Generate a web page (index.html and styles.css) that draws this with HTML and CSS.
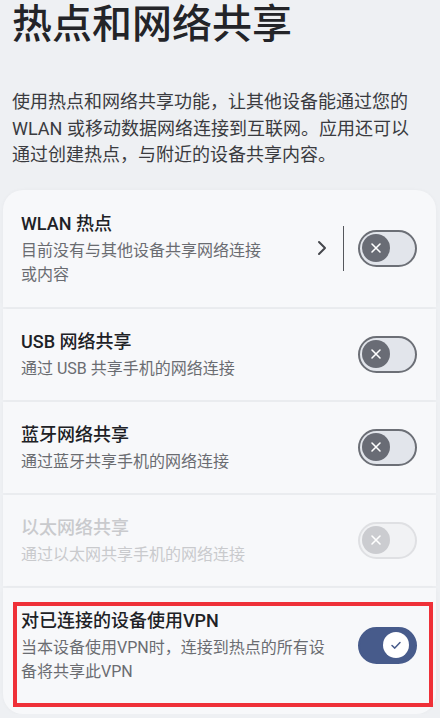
FILE: index.html
```html
<!DOCTYPE html>
<html lang="zh-CN">

<head>
    <meta charset="UTF-8">
    <meta name="viewport" content="width=device-width, initial-scale=1.0">
    <title>热点和网络共享</title>
    <link rel="stylesheet" href="styles.css">
</head>

<body>
    <h1 class="page-title">热点和网络共享</h1>
    <p class="intro">使用热点和网络共享功能，让其他设备能通过您的WLAN 或移动数据网络连接到互联网。应用还可以通过创建热点，与附近的设备共享内容。</p>

    <div class="list">
        <div class="row first">
            <div class="text">
                <div class="title">WLAN 热点</div>
                <div class="summary">目前没有与其他设备共享网络连接或内容</div>
            </div>
            <div class="chevron">
                <svg width="10" height="16" viewBox="0 0 10 16"><path d="M2 2l6 6-6 6" fill="none" stroke="#45474c" stroke-width="2" stroke-linecap="round" stroke-linejoin="round"/></svg>
            </div>
            <div class="divider"></div>
            <div class="switch">
                <div class="knob">
                    <svg width="12" height="12" viewBox="0 0 12 12"><path d="M2 2l8 8M10 2l-8 8" stroke="#fff" stroke-width="1.6" stroke-linecap="round"/></svg>
                </div>
            </div>
        </div>

        <div class="row">
            <div class="text">
                <div class="title">USB 网络共享</div>
                <div class="summary">通过 USB 共享手机的网络连接</div>
            </div>
            <div class="switch">
                <div class="knob">
                    <svg width="12" height="12" viewBox="0 0 12 12"><path d="M2 2l8 8M10 2l-8 8" stroke="#fff" stroke-width="1.6" stroke-linecap="round"/></svg>
                </div>
            </div>
        </div>

        <div class="row">
            <div class="text">
                <div class="title">蓝牙网络共享</div>
                <div class="summary">通过蓝牙共享手机的网络连接</div>
            </div>
            <div class="switch">
                <div class="knob">
                    <svg width="12" height="12" viewBox="0 0 12 12"><path d="M2 2l8 8M10 2l-8 8" stroke="#fff" stroke-width="1.6" stroke-linecap="round"/></svg>
                </div>
            </div>
        </div>

        <div class="row disabled">
            <div class="text">
                <div class="title">以太网络共享</div>
                <div class="summary">通过以太网共享手机的网络连接</div>
            </div>
            <div class="switch">
                <div class="knob">
                    <svg width="12" height="12" viewBox="0 0 12 12"><path d="M2 2l8 8M10 2l-8 8" stroke="#fff" stroke-width="1.6" stroke-linecap="round"/></svg>
                </div>
            </div>
        </div>

        <div class="row last vpn">
            <div class="text">
                <div class="title">对已连接的设备使用VPN</div>
                <div class="summary">当本设备使用VPN时，连接到热点的所有设备将共享此VPN</div>
            </div>
            <div class="switch on">
                <div class="knob">
                    <svg width="14" height="14" viewBox="0 0 14 14"><path d="M3 7.5l2.8 2.6L11 4.5" fill="none" stroke="#475b8b" stroke-width="1.5" stroke-linecap="round" stroke-linejoin="round"/></svg>
                </div>
            </div>
            <div class="mark"></div>
        </div>
    </div>
</body>

</html>
```

FILE: styles.css
```css
body {
    margin: 0;
    background-color: #eef0f3;
    font-family: Roboto, "Noto Sans CJK SC", sans-serif;
    color: #222326;
}

.page-title {
    margin: 0;
    padding: 1px 12px 0;
    font-size: 40px;
    line-height: 48px;
    font-weight: 500;
    color: #232428;
}

.intro {
    margin: 40px 0 0;
    padding: 0 20px 0 12px;
    font-size: 18px;
    line-height: 26.5px;
    color: #3a3b3f;
}

.list {
    display: flex;
    flex-direction: column;
    gap: 2px;
    margin: 21px 4px 0 3px;
}

.row {
    display: flex;
    align-items: center;
    gap: 24px;
    padding: 19px 19px 19px 18px;
    background-color: #f7f8fa;
    box-shadow: 0 0 4px rgba(0, 0, 0, 0.03);
}

.row.first {
    gap: 0;
    padding-top: 20px;
    padding-bottom: 20px;
    border-radius: 20px 20px 0 0;
}

.row.last {
    padding-top: 19px;
    padding-bottom: 30px;
    border-radius: 0 0 20px 20px;
}

.text {
    flex: 1;
    min-width: 0;
}

.title {
    font-size: 18px;
    line-height: 28px;
    font-weight: 500;
    color: #202125;
    margin-bottom: 1px;
}

.summary {
    font-size: 16px;
    line-height: 24px;
    color: #6a6c71;
}

.chevron {
    display: flex;
    align-items: center;
    margin-left: 40px;
}

.divider {
    width: 1.5px;
    height: 45px;
    background-color: #55575c;
    margin: 0 14px 0 16px;
}

.switch {
    flex: none;
    display: flex;
    align-items: center;
    box-sizing: border-box;
    width: 59px;
    height: 37px;
    padding: 0 2px;
    border: 2px solid #6c6f76;
    border-radius: 19px;
    background-color: #e2e5eb;
}

.knob {
    display: flex;
    align-items: center;
    justify-content: center;
    width: 28px;
    height: 28px;
    border-radius: 50%;
    background-color: #696c75;
}

.switch.on {
    justify-content: flex-end;
    padding: 0 6px;
    border-color: #475b8b;
    background-color: #475b8b;
}

.switch.on .knob {
    width: 26px;
    height: 26px;
    background-color: #ffffff;
}

.disabled .title,
.disabled .summary {
    color: #c9cacd;
}

.disabled .switch {
    border-color: #dfe0e3;
    background-color: #f1f2f4;
}

.disabled .knob {
    background-color: #cbccd0;
}

.vpn {
    position: relative;
}

.mark {
    position: absolute;
    left: 10px;
    right: 3px;
    top: 14px;
    height: 105px;
    border: 4px solid #ef3038;
    box-sizing: border-box;
}
```
